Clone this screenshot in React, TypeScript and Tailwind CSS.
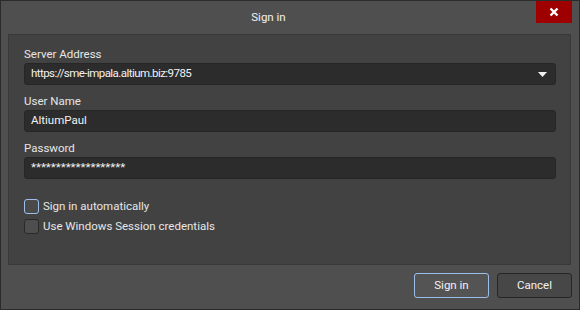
import React from "react";

function Field({ label, value, dropdown, tight }: { label: string; value: string; dropdown?: boolean; tight?: boolean }) {
  return (
    <div className="flex flex-col">
      <div className="h-[17px] leading-[17px] text-[#e6e6e6]">{label}</div>
      <div className="h-[22px] rounded-[3px] border border-[#262626] bg-[#2c2c2c] flex items-center pl-[6px] pr-[8px] text-[#f2f2f2]">
        <span className={tight ? "flex-1 tracking-[-0.55px]" : "flex-1"}>{value}</span>
        {dropdown && (
          <svg width="9" height="5" viewBox="0 0 9 5">
            <polygon points="0,0 9,0 4.5,5" fill="#f2f2f2" />
          </svg>
        )}
      </div>
    </div>
  );
}

export default function App() {
  return (
    <div
      className="w-[580px] h-[310px] bg-[#4f4f4f] border border-[#2b2b2b] flex flex-col text-[11.5px]"
      style={{ fontFamily: 'Roboto, "Open Sans", sans-serif' }}
    >
      <div className="h-[33px] flex items-start">
        <div className="flex-1 h-[33px] flex items-center justify-center text-[#f2f2f2] pt-[1px]">Sign in</div>
        <div className="w-[36px] h-[22px] bg-[#9e0000] mr-[7px] flex items-center justify-center">
          <svg width="10" height="10" viewBox="0 0 10 10">
            <path d="M1.5 1.5 L8.5 8.5 M8.5 1.5 L1.5 8.5" stroke="#ffffff" strokeWidth="2.4" />
          </svg>
        </div>
      </div>
      <div className="ml-[7px] mr-[8px] h-[231px] bg-[#424242] border border-[#383838] pl-[15px] pr-[14px] pt-[11px] flex flex-col">
        <div className="flex flex-col gap-[8px]">
          <Field label="Server Address" value="https://sme-impala.altium.biz:9785" dropdown tight />
          <Field label="User Name" value="AltiumPaul" />
          <Field label="Password" value="*******************" />
        </div>
        <div className="mt-[20px] flex flex-col gap-[5px] text-[#e6e6e6]">
          <div className="h-[15px] flex items-center gap-[4px]">
            <div className="w-[15px] h-[15px] rounded-[3px] border border-[#9cc0ea] bg-[#4a4a4a]" />
            <span>Sign in automatically</span>
          </div>
          <div className="h-[15px] flex items-center gap-[4px]">
            <div className="w-[15px] h-[15px] rounded-[3px] border border-[#2a2a2a] bg-[#4e4e4e]" />
            <span>Use Windows Session credentials</span>
          </div>
        </div>
      </div>
      <div className="flex justify-end gap-[8px] mt-[8px] mr-[7px]">
        <button className="w-[75px] h-[25px] rounded-[3px] border border-[#9cbfea] bg-[#545454] text-[#f2f2f2]">Sign in</button>
        <button className="w-[75px] h-[25px] rounded-[3px] border border-[#262626] bg-[#474747] text-[#f2f2f2]">Cancel</button>
      </div>
    </div>
  );
}
